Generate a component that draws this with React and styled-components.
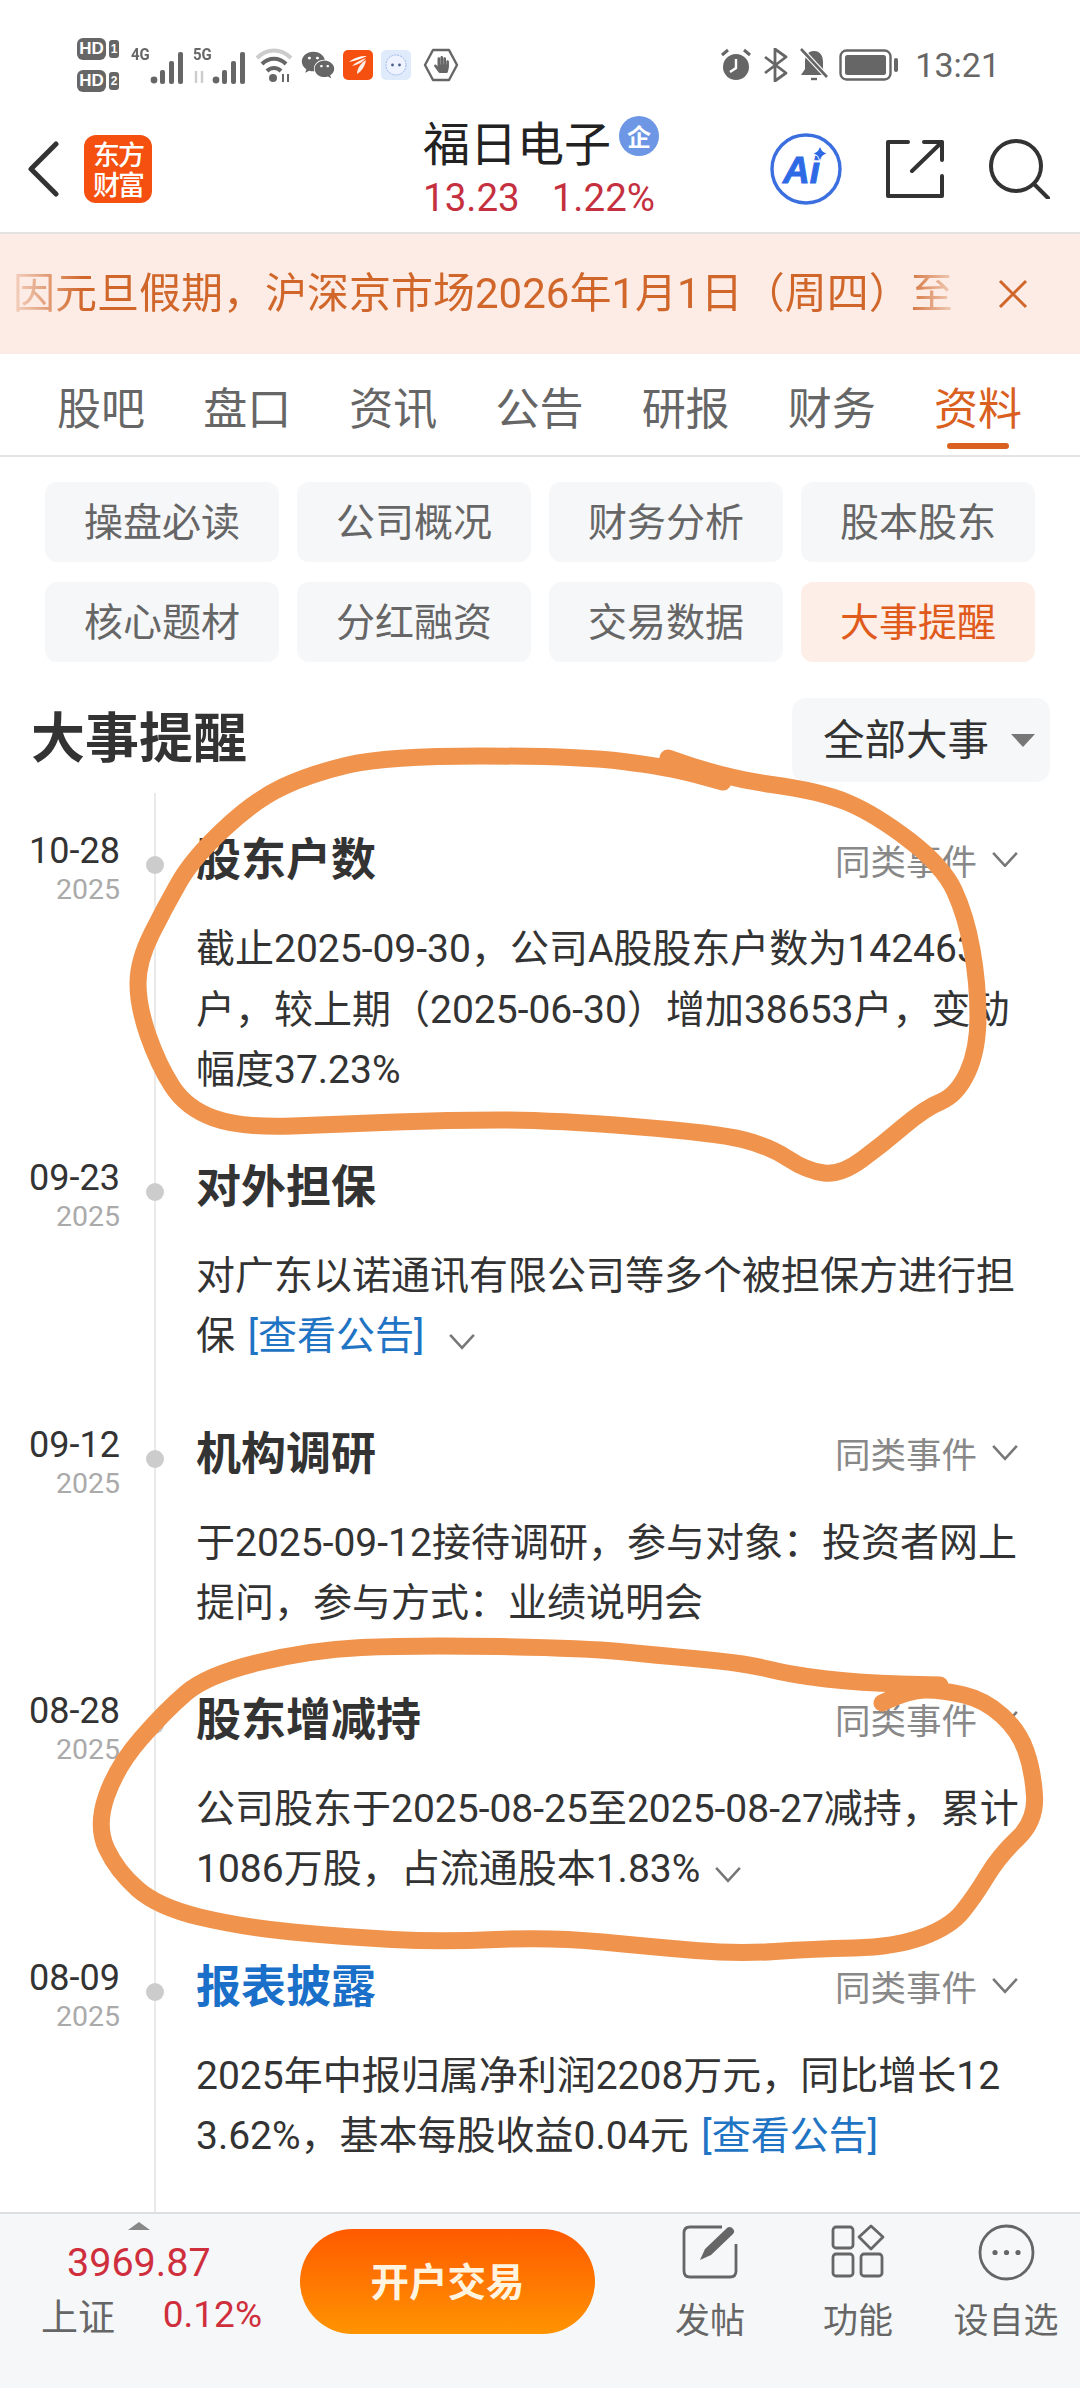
import React from 'react';
import styled, { createGlobalStyle } from 'styled-components';
import { FaWeixin, FaHandPaper } from 'react-icons/fa';

const GlobalStyle = createGlobalStyle`
  html, body { margin: 0; padding: 0; background: #fff; }
  * { box-sizing: border-box; }
  body { font-family: "Noto Sans CJK SC", "Noto Sans", sans-serif; }
`;

const Page = styled.div`
  position: relative;
  width: 1080px;
  height: 2388px;
  overflow: hidden;
  display: flex;
  flex-direction: column;
  background: #fff;
`;

/* status bar */
const StatusBar = styled.div`
  height: 105px;
  padding: 24px 80px 0 77px;
  display: flex;
  justify-content: space-between;
  align-items: center;
  color: #666;
`;
const StatusGroup = styled.div`
  display: flex;
  align-items: center;
  gap: ${(p) => p.gap || 8}px;
`;
const HdCol = styled.div`
  display: flex;
  flex-direction: column;
  gap: 10px;
  margin-right: 4px;
`;
const HdRow = styled.div`
  display: flex;
  align-items: center;
  gap: 3px;
`;
const HdBadge = styled.span`
  width: 29px;
  height: 22px;
  border-radius: 6px;
  background: #666;
  color: #fff;
  font: 700 17px/22px "Liberation Sans", sans-serif;
  text-align: center;
`;
const HdNum = styled.span`
  width: 10px;
  height: 18px;
  border-radius: 3px;
  background: #666;
  color: #fff;
  font: 700 12px/18px "Liberation Sans", sans-serif;
  text-align: center;
`;
const Signal = styled.div`
  position: relative;
  width: 54px;
  height: 40px;
`;
const NetLabel = styled.span`
  position: absolute;
  left: 0;
  top: 0;
  font: 700 17px/18px "Roboto", sans-serif;
  color: #666;
  transform: scaleX(0.88);
  transform-origin: left;
`;
const AppTile = styled.div`
  width: 30px;
  height: 30px;
  border-radius: 5px;
  background: ${(p) => p.bg};
  display: flex;
  align-items: center;
  justify-content: center;
`;
const HandBox = styled.div`
  position: relative;
  width: 36px;
  height: 36px;
  margin-left: 4px;
  display: flex;
  align-items: center;
  justify-content: center;
`;
const Clock = styled.span`
  font: 400 34px/36px "Roboto", sans-serif;
  color: #666;
  margin-left: 6px;
`;

/* header */
const Header = styled.div`
  height: 129px;
  padding: 0 30px 0 27px;
  display: flex;
  align-items: center;
  position: relative;
  border-bottom: 2px solid #e2e2e2;
`;
const Logo = styled.div`
  width: 68px;
  height: 68px;
  margin-left: 25px;
  border-radius: 12px;
  background: #f5500f;
  color: #fff;
  display: flex;
  flex-direction: column;
  align-items: center;
  justify-content: center;
  font-size: 27px;
  font-weight: 500;
  line-height: 30px;
  letter-spacing: -2px;
`;
const TitleBlock = styled.div`
  position: absolute;
  left: 423px;
  top: 10px;
`;
const TitleRow = styled.div`
  display: flex;
  align-items: flex-start;
  gap: 8px;
  height: 52px;
`;
const StockName = styled.div`
  font-size: 47px;
  line-height: 52px;
  color: #222;
`;
const QiBadge = styled.div`
  width: 40px;
  height: 40px;
  margin-top: 1px;
  border-radius: 50%;
  background: #6d97e4;
  color: #fff;
  font-size: 24px;
  font-weight: 700;
  line-height: 40px;
  text-align: center;
`;
const PriceRow = styled.div`
  display: flex;
  gap: 32px;
  margin-top: 12px;
  font: 400 38.5px/38px "Roboto", sans-serif;
  color: #c5303f;
`;
const HeaderIcons = styled.div`
  margin-left: auto;
  display: flex;
  align-items: center;
  gap: 44px;
`;

/* banner */
const Notice = styled.div`
  height: 120px;
  background: #fcece5;
  display: flex;
  align-items: center;
  justify-content: space-between;
  padding: 0 52px 0 13px;
`;
const NoticeText = styled.div`
  width: 942px;
  overflow: hidden;
  white-space: nowrap;
  font-family: "Roboto", "Noto Sans CJK SC", sans-serif;
  font-size: 42px;
  line-height: 50px;
  color: #d0662a;
  mask-image: linear-gradient(90deg, rgba(0,0,0,.2) 0, #000 70px, #000 890px, rgba(0,0,0,.2) 942px);
`;

/* tabs */
const Tabs = styled.div`
  height: 103px;
  padding: 0 58px 0 57px;
  display: flex;
  justify-content: space-between;
  border-bottom: 2px solid #e4e4e4;
`;
const Tab = styled.div`
  position: relative;
  font-size: 44px;
  line-height: 104px;
  color: ${(p) => (p.active ? '#d9601f' : '#666')};
  &::after {
    content: '';
    display: ${(p) => (p.active ? 'block' : 'none')};
    position: absolute;
    left: 13px;
    right: 13px;
    bottom: 6px;
    height: 6px;
    border-radius: 3px;
    background: #d9601f;
  }
`;

/* sub navigation */
const Chips = styled.div`
  padding: 25px 45px 0;
  display: grid;
  grid-template-columns: repeat(4, 234px);
  grid-auto-rows: 80px;
  gap: 20px 18px;
`;
const Chip = styled.div`
  border-radius: 12px;
  background: ${(p) => (p.active ? '#fdeee7' : '#f6f7f9')};
  color: ${(p) => (p.active ? '#e05a1c' : '#666')};
  font-size: 39px;
  line-height: 75px;
  text-align: center;
`;

const SectionHead = styled.div`
  margin-top: 36px;
  padding: 0 30px 0 31px;
  height: 84px;
  display: flex;
  justify-content: space-between;
  align-items: center;
`;
const SectionTitle = styled.div`
  font-size: 54px;
  font-weight: 700;
  line-height: 70px;
  margin-top: -10px;
  color: #333;
`;
const Select = styled.div`
  width: 258px;
  height: 84px;
  padding: 0 15px 7px 31px;
  border-radius: 14px;
  background: #f6f7f9;
  display: flex;
  align-items: center;
  justify-content: space-between;
  font-size: 41.5px;
  color: #333;
  &::after {
    content: '';
    margin-top: 7px;
    border-left: 12px solid transparent;
    border-right: 12px solid transparent;
    border-top: 13px solid #777;
  }
`;

/* timeline */
const Timeline = styled.div`
  flex: 1;
  margin-top: 11px;
  min-height: 0;
  display: flex;
  flex-direction: column;
  background: linear-gradient(#eaeaea, #eaeaea) 154px 0 / 2px 100% no-repeat;
`;
const Item = styled.div`
  display: grid;
  grid-template-columns: 120px 76px 1fr;
  padding: 34px 0 19px;
`;
const DateCol = styled.div`
  text-align: right;
  padding-top: 4px;
`;
const DateDay = styled.div`
  font: 400 36px/40px "Roboto", sans-serif;
  color: #333;
`;
const DateYear = styled.div`
  font: 400 28.5px/38px "Roboto", sans-serif;
  color: #aaa;
`;
const RailCol = styled.div`
  display: flex;
  justify-content: flex-start;
  padding: 29px 0 0 26px;
`;
const Dot = styled.span`
  width: 18px;
  height: 18px;
  border-radius: 50%;
  background: #ccc;
`;
const Body = styled.div`
  padding-right: 60px;
`;
const ItemHead = styled.div`
  height: 60px;
  display: flex;
  align-items: center;
  justify-content: space-between;
`;
const ItemTitle = styled.div`
  font-size: 45px;
  font-weight: 700;
  line-height: 60px;
  color: ${(p) => (p.link ? '#1a6fc9' : '#333')};
`;
const SameKind = styled.div`
  display: flex;
  align-items: center;
  gap: 14px;
  margin: 4px 1px 0 0;
  font-size: 35.5px;
  color: #888;
`;
const ItemText = styled.div`
  margin-top: 32px;
  font-family: "Roboto", "Noto Sans CJK SC", sans-serif;
  font-size: 39px;
  line-height: 60.5px;
  color: #333;
  white-space: nowrap;
`;
const Link = styled.span`
  margin-left: 3px;
  color: #1f74c4;
`;
const InlineChevron = styled.span`
  display: inline-block;
  margin-left: ${(p) => p.gap || 14}px;
  vertical-align: -1px;
`;

/* bottom bar */
const BottomBar = styled.div`
  height: 176px;
  flex: none;
  border-top: 2px solid #dcdee2;
  background: #f6f7f9;
  display: flex;
  position: relative;
  z-index: 1;
`;
const IndexBox = styled.div`
  width: 300px;
  padding: 8px 0 0 41px;
`;
const Caret = styled.div`
  width: 0;
  margin-left: 87px;
  border-left: 11px solid transparent;
  border-right: 11px solid transparent;
  border-bottom: 8px solid #888;
`;
const IndexValue = styled.div`
  margin: 9px 0 0 26px;
  font: 400 39.5px/48px "Roboto", sans-serif;
  color: #cf2f3c;
`;
const IndexRow = styled.div`
  display: flex;
  justify-content: space-between;
  align-items: center;
  width: 221px;
  margin-top: 3px;
  font-size: 37px;
  line-height: 50px;
  color: #666;
`;
const IndexPct = styled.span`
  font-family: "Roboto", sans-serif;
  color: #cf2f3c;
`;
const TradeButton = styled.div`
  width: 295px;
  height: 105px;
  margin-top: 15px;
  border-radius: 53px;
  background: linear-gradient(#ff5a00, #ff9400);
  color: #fff4e0;
  font-size: 38.5px;
  font-weight: 700;
  line-height: 100px;
  text-align: center;
`;
const Actions = styled.div`
  flex: 1;
  display: grid;
  grid-template-columns: repeat(3, 148px);
  padding-left: 41px;
`;
const Action = styled.div`
  display: flex;
  flex-direction: column;
  align-items: center;
  padding-top: 10px;
  font-size: 35px;
  line-height: 50px;
  white-space: nowrap;
  color: #666;
`;
const ActionIcon = styled.div`
  height: 57px;
  margin-bottom: 12px;
`;

/* hand drawn marks on top of the screenshot */
const Scribble = styled.svg`
  position: absolute;
  left: 0;
  top: 0;
  pointer-events: none;
  z-index: 2;
`;

const smooth = (pts) => {
  let d = `M${pts[0][0]} ${pts[0][1]}`;
  for (let i = 1; i < pts.length - 1; i++) {
    const mx = (pts[i][0] + pts[i + 1][0]) / 2;
    const my = (pts[i][1] + pts[i + 1][1]) / 2;
    d += ` Q${pts[i][0]} ${pts[i][1]} ${mx} ${my}`;
  }
  const last = pts[pts.length - 1];
  return d + ` L${last[0]} ${last[1]}`;
};

const loopOne = [
  [668, 758], [723, 778], [820, 791], [875, 814], [943, 866], [966, 916], [978, 983], [978, 1050],
  [957, 1095], [925, 1108], [883, 1144], [841, 1175], [807, 1171], [769, 1146], [716, 1133],
  [551, 1120], [448, 1120], [344, 1124], [241, 1128], [186, 1108], [158, 1064], [138, 1006],
  [138, 961], [165, 907], [193, 858], [255, 800], [310, 774], [386, 756], [578, 756], [668, 767], [723, 782],
];
const loopTwo = [
  [882, 1703], [909, 1690], [943, 1690], [985, 1700], [1019, 1731], [1033, 1771], [1036, 1821],
  [999, 1856], [975, 1896], [950, 1927], [895, 1947], [813, 1949], [737, 1954], [654, 1947],
  [551, 1937], [441, 1942], [344, 1937], [241, 1927], [158, 1907], [117, 1871], [96, 1826],
  [117, 1766], [165, 1711], [207, 1675], [310, 1650], [413, 1645], [585, 1648], [654, 1655],
  [744, 1663], [792, 1675], [861, 1683], [940, 1685],
];

const Chevron = ({ size = 28, color = '#777' }) => (
  <svg width={size} height={size * 0.6} viewBox="0 0 28 17" fill="none">
    <path d="M2 2 L14 15 L26 2" stroke={color} strokeWidth="2.6" />
  </svg>
);

const Bars = ({ arrows }) => (
  <svg width="54" height="40" viewBox="0 0 54 40" style={{ position: 'absolute', left: 0, top: 0 }}>
    {arrows && <path d="M3 26 V38 M9 26 V38" stroke="#ccc" strokeWidth="2.4" />}
    <circle cx="23" cy="35" r="3.4" fill="#666" />
    <rect x="29" y="25" width="5" height="14" rx="2" fill="#666" />
    <rect x="38" y="16" width="5" height="23" rx="2" fill="#666" />
    <rect x="47" y="7" width="5" height="32" rx="2" fill="#666" />
  </svg>
);

const Wifi = () => (
  <svg width="38" height="36" viewBox="0 0 38 36" fill="none">
    <path d="M2 11 C12 1 26 1 36 11" stroke="#ccc" strokeWidth="4" />
    <path d="M7 17 C14 10 24 10 31 17" stroke="#666" strokeWidth="4" />
    <path d="M12 24 C16 20 22 20 26 24" stroke="#666" strokeWidth="4" />
    <circle cx="18" cy="31" r="4" fill="#666" />
    <path d="M28 35 V27 M33 27 V35" stroke="#666" strokeWidth="2" />
  </svg>
);

const RoboFace = () => (
  <svg width="24" height="24" viewBox="0 0 24 24" fill="none">
    <circle cx="12" cy="12" r="10" fill="#eef3ff" stroke="#9db7e8" strokeWidth="1" strokeDasharray="2 1" />
    <circle cx="8.5" cy="12" r="1.4" fill="#4a5f8a" />
    <circle cx="15.5" cy="12" r="1.4" fill="#4a5f8a" />
  </svg>
);

const Banana = () => (
  <svg width="22" height="22" viewBox="0 0 22 22" fill="#fff">
    <path d="M2 8 C8 3 14 2 20 2 C14 5 8 7 2 8 Z" />
    <path d="M5 12 C9 8 14 6 19 4 C15 9 10 11 5 12 Z" opacity=".9" />
    <path d="M10 20 C10 14 14 9 19 6 C18 12 15 17 10 20 Z" opacity=".9" />
  </svg>
);

const HandSign = () => (
  <svg width="36" height="36" viewBox="0 0 36 36" fill="none" style={{ position: 'absolute', left: 0, top: 0 }}>
    <path d="M10 3 H26 L34 18 L26 33 H10 L2 18 Z" stroke="#666" strokeWidth="2.4" strokeLinejoin="round" />
  </svg>
);

const Alarm = () => (
  <svg width="34" height="36" viewBox="0 0 34 36" fill="none">
    <circle cx="17" cy="20" r="13" fill="#666" />
    <path d="M17 12 V21 L11 25" stroke="#fff" strokeWidth="2.4" />
    <path d="M3 8 L9 3 M31 8 L25 3" stroke="#666" strokeWidth="3" />
  </svg>
);

const Bluetooth = () => (
  <svg width="26" height="34" viewBox="0 0 26 34" fill="none">
    <path d="M2 9 L23 25 L12 33 V1 L23 9 L2 25" stroke="#666" strokeWidth="2.8" strokeLinejoin="round" />
  </svg>
);

const BellOff = () => (
  <svg width="30" height="34" viewBox="0 0 30 34">
    <path d="M15 3 C22 3 24 9 24 14 V21 L28 27 H2 L6 21 V14 C6 9 8 3 15 3 Z" fill="#666" />
    <path d="M3 2 L29 30" stroke="#fff" strokeWidth="5" />
    <path d="M2 1 L28 29" stroke="#666" strokeWidth="2.6" />
    <path d="M12 31 H18" stroke="#666" strokeWidth="2.4" />
  </svg>
);

const Battery = () => (
  <svg width="60" height="32" viewBox="0 0 60 32" fill="none">
    <rect x="1.5" y="1.5" width="50" height="29" rx="6" stroke="#666" strokeWidth="2.4" />
    <rect x="6" y="6" width="41" height="20" rx="2.5" fill="#666" />
    <rect x="55" y="9" width="4" height="14" rx="2" fill="#666" />
  </svg>
);

const AiIcon = () => (
  <svg width="72" height="72" viewBox="0 0 72 72" fill="none">
    <circle cx="36" cy="36" r="34" stroke="#3b6fe0" strokeWidth="3.4" />
    <text x="13" y="50" fontFamily="Liberation Sans" fontWeight="700" fontStyle="italic" fontSize="37" stroke="#2f6ae6" strokeWidth="1" fill="#2f6ae6">Ai</text>
    <path d="M50 13 L52.5 18 L57 20.5 L52.5 23 L50 28 L47.5 23 L43 20.5 L47.5 18 Z" fill="#2f6ae6" stroke="#fff" strokeWidth="1" />
  </svg>
);

const ShareIcon = () => (
  <svg width="58" height="58" viewBox="0 0 58 58" fill="none" stroke="#333" strokeWidth="4" strokeLinecap="round" strokeLinejoin="round">
    <path d="M22 2 H2 V56 H56 V36" />
    <path d="M26 31 L56 2 M38 2 H56 V20" />
  </svg>
);

const SearchIcon = () => (
  <svg width="62" height="60" viewBox="0 0 62 60" fill="none" stroke="#333" strokeWidth="4" strokeLinecap="round">
    <circle cx="28" cy="27" r="25" />
    <path d="M46 45 L60 59" />
  </svg>
);

const BackIcon = () => (
  <svg width="32" height="56" viewBox="0 0 32 56" fill="none">
    <path d="M29 3 L4 28 L29 53" stroke="#333" strokeWidth="5" strokeLinecap="round" strokeLinejoin="round" />
  </svg>
);

const CloseIcon = () => (
  <svg width="30" height="30" viewBox="0 0 30 30" fill="none">
    <path d="M2 2 L28 28 M28 2 L2 28" stroke="#d0662a" strokeWidth="3" />
  </svg>
);

const PostIcon = () => (
  <svg width="56" height="56" viewBox="0 0 56 56" fill="none">
    <path d="M54 20 V47 C54 51 52 53 48 53 H8 C4 53 2 51 2 47 V9 C2 5 4 3 8 3 H40" stroke="#666" strokeWidth="2.8" />
    <path d="M18 36 L23 25 L45 4 C47 2 50 3 51 5 C53 7 52 9 51 10 L29 31 Z" fill="#666" />
  </svg>
);

const GridIcon = () => (
  <svg width="54" height="54" viewBox="0 0 54 54" fill="none" stroke="#666" strokeWidth="2.8">
    <rect x="2" y="3" width="20" height="21" rx="3" />
    <rect x="2" y="30" width="20" height="22" rx="3" />
    <rect x="30" y="30" width="21" height="22" rx="3" />
    <path d="M40 2 L52 13 L40 25 L28 13 Z" strokeLinejoin="round" />
  </svg>
);

const MoreIcon = () => (
  <svg width="57" height="57" viewBox="0 0 57 57" fill="none">
    <circle cx="28.5" cy="28.5" r="26.5" stroke="#666" strokeWidth="2.8" />
    <circle cx="17" cy="28.5" r="2.6" fill="#666" />
    <circle cx="28.5" cy="28.5" r="2.6" fill="#666" />
    <circle cx="40" cy="28.5" r="2.6" fill="#666" />
  </svg>
);

const tabs = ['股吧', '盘口', '资讯', '公告', '研报', '财务', '资料'];
const chips = ['操盘必读', '公司概况', '财务分析', '股本股东', '核心题材', '分红融资', '交易数据', '大事提醒'];

const EventItem = ({ day, title, link, same = true, children }) => (
  <Item>
    <DateCol>
      <DateDay>{day}</DateDay>
      <DateYear>2025</DateYear>
    </DateCol>
    <RailCol><Dot /></RailCol>
    <Body>
      <ItemHead>
        <ItemTitle link={link}>{title}</ItemTitle>
        {same && (
          <SameKind>同类事件<Chevron /></SameKind>
        )}
      </ItemHead>
      <ItemText>{children}</ItemText>
    </Body>
  </Item>
);

export default function App() {
  return (
    <Page>
      <GlobalStyle />
      <StatusBar>
        <StatusGroup>
          <HdCol>
            <HdRow><HdBadge>HD</HdBadge><HdNum>1</HdNum></HdRow>
            <HdRow><HdBadge>HD</HdBadge><HdNum>2</HdNum></HdRow>
          </HdCol>
          <Signal><NetLabel>4G</NetLabel><Bars /></Signal>
          <Signal><NetLabel>5G</NetLabel><Bars arrows /></Signal>
          <Wifi />
          <FaWeixin size={34} color="#666" />
          <AppTile bg="#f5500f"><Banana /></AppTile>
          <AppTile bg="#dfeafb"><RoboFace /></AppTile>
          <HandBox>
            <HandSign />
            <FaHandPaper size={17} color="#666" />
          </HandBox>
        </StatusGroup>
        <StatusGroup gap={10}>
          <Alarm />
          <Bluetooth />
          <BellOff />
          <Battery />
          <Clock>13:21</Clock>
        </StatusGroup>
      </StatusBar>

      <Header>
        <BackIcon />
        <Logo><span>东方</span><span>财富</span></Logo>
        <TitleBlock>
          <TitleRow>
            <StockName>福日电子</StockName>
            <QiBadge>企</QiBadge>
          </TitleRow>
          <PriceRow><span>13.23</span><span>1.22%</span></PriceRow>
        </TitleBlock>
        <HeaderIcons>
          <AiIcon />
          <ShareIcon />
          <SearchIcon />
        </HeaderIcons>
      </Header>

      <Notice>
        <NoticeText>因元旦假期，沪深京市场2026年1月1日（周四）至</NoticeText>
        <CloseIcon />
      </Notice>

      <Tabs>
        {tabs.map((t, i) => (
          <Tab key={t} active={i === tabs.length - 1}>{t}</Tab>
        ))}
      </Tabs>

      <Chips>
        {chips.map((c, i) => (
          <Chip key={c} active={i === chips.length - 1}>{c}</Chip>
        ))}
      </Chips>

      <SectionHead>
        <SectionTitle>大事提醒</SectionTitle>
        <Select>全部大事</Select>
      </SectionHead>

      <Timeline>
        <EventItem day="10-28" title="股东户数">
          截止2025-09-30，公司A股股东户数为142463<br />
          户，较上期（2025-06-30）增加38653户，变动<br />
          幅度37.23%
        </EventItem>
        <EventItem day="09-23" title="对外担保" same={false}>
          对广东以诺通讯有限公司等多个被担保方进行担<br />
          保 <Link>[查看公告]</Link>
          <InlineChevron gap={24}><Chevron /></InlineChevron>
        </EventItem>
        <EventItem day="09-12" title="机构调研">
          于2025-09-12接待调研，参与对象：投资者网上<br />
          提问，参与方式：业绩说明会
        </EventItem>
        <EventItem day="08-28" title="股东增减持">
          公司股东于2025-08-25至2025-08-27减持，累计<br />
          1086万股，占流通股本1.83%
          <InlineChevron><Chevron /></InlineChevron>
        </EventItem>
        <EventItem day="08-09" title="报表披露" link>
          2025年中报归属净利润2208万元，同比增长12<br />
          3.62%，基本每股收益0.04元 <Link>[查看公告]</Link>
        </EventItem>
      </Timeline>

      <BottomBar>
        <IndexBox>
          <Caret />
          <IndexValue>3969.87</IndexValue>
          <IndexRow><span>上证</span><IndexPct>0.12%</IndexPct></IndexRow>
        </IndexBox>
        <TradeButton>开户交易</TradeButton>
        <Actions>
          <Action><ActionIcon><PostIcon /></ActionIcon>发帖</Action>
          <Action><ActionIcon><GridIcon /></ActionIcon>功能</Action>
          <Action><ActionIcon><MoreIcon /></ActionIcon>设自选</Action>
        </Actions>
      </BottomBar>

      <Scribble width="1080" height="2388" viewBox="0 0 1080 2388" fill="none">
        <path d={smooth(loopOne)} stroke="#f0934c" strokeWidth="17" strokeLinecap="round" strokeLinejoin="round" />
        <path d={smooth(loopTwo)} stroke="#f0934c" strokeWidth="17" strokeLinecap="round" strokeLinejoin="round" />
      </Scribble>
    </Page>
  );
}
